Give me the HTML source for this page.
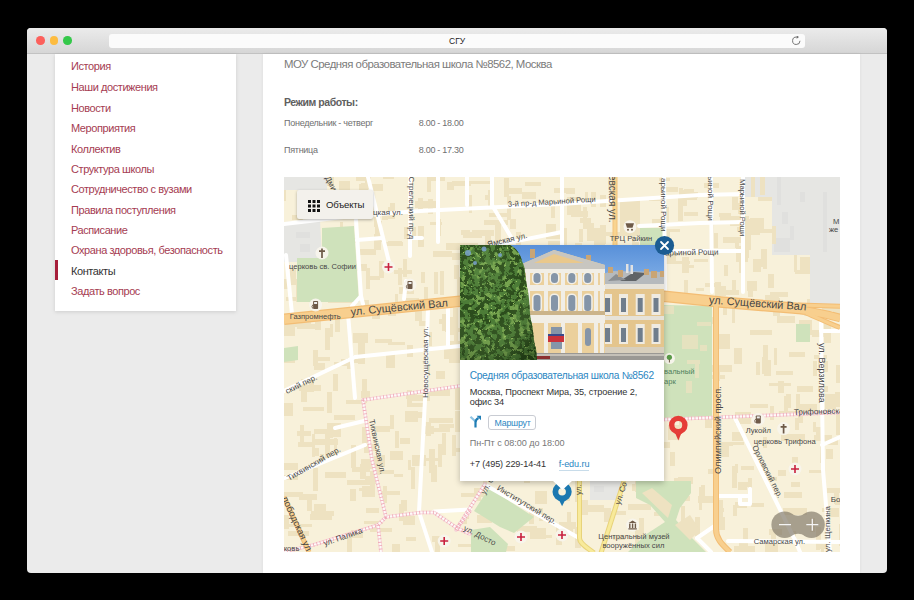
<!DOCTYPE html>
<html><head><meta charset="utf-8">
<style>
*{margin:0;padding:0;box-sizing:border-box}
html,body{width:914px;height:600px;overflow:hidden;background:#000;font-family:"Liberation Sans",sans-serif}
.a{position:absolute}
.t{position:absolute;white-space:nowrap;line-height:1}
#win{position:absolute;left:27px;top:28px;width:860px;height:545px;border-radius:4px;background:#ebebeb;overflow:hidden}
#tb{position:absolute;left:27px;top:28px;width:860px;height:26px;background:linear-gradient(#ebebeb,#d6d6d6);border-bottom:1px solid #c2c2c2;border-radius:4px 4px 0 0}
.tl{position:absolute;top:36px;width:8.6px;height:8.6px;border-radius:50%}
#addr{position:absolute;left:109px;top:34px;width:696px;height:14px;background:#fbfbfb;border-radius:3px}
#side{position:absolute;left:55px;top:54px;width:181px;height:257px;background:#fff;box-shadow:0 1px 4px rgba(0,0,0,.13)}
.m{position:absolute;left:71px;font-size:11px;letter-spacing:-0.42px;color:#a53c52;white-space:nowrap;line-height:1}
#main{position:absolute;left:263px;top:54px;width:597px;height:519px;background:#fff;box-shadow:0 0 3px rgba(0,0,0,.07)}
</style></head><body>
<div id="win"></div>
<div id="tb"></div>
<div class="tl" style="left:36px;background:#fc605c"></div>
<div class="tl" style="left:49.6px;background:#fdbc40"></div>
<div class="tl" style="left:63.2px;background:#34c84a"></div>
<div id="addr"></div>
<div class="t" style="left:449px;top:36.5px;font-size:8.5px;color:#222">СГУ</div>
<svg class="a" style="left:791px;top:36px" width="11" height="11" viewBox="0 0 11 11"><path d="M5.6 1.1 A3.7 3.7 0 1 0 9.0 4.8" fill="none" stroke="#666" stroke-width="0.9"/><path d="M5.6 -0.5 L8.0 1.1 L5.6 2.7 Z" fill="#666"/></svg>

<div id="side"></div>
<div class="a" style="left:55px;top:260px;width:3px;height:20px;background:#a61e3a"></div>
<div class="m" style="top:61px">История</div>
<div class="m" style="top:82.4px">Наши достижения</div>
<div class="m" style="top:102.8px">Новости</div>
<div class="m" style="top:123.1px">Мероприятия</div>
<div class="m" style="top:143.5px">Коллектив</div>
<div class="m" style="top:163.9px">Структура школы</div>
<div class="m" style="top:184.2px">Сотрудничество с вузами</div>
<div class="m" style="top:204.6px">Правила поступления</div>
<div class="m" style="top:225px">Расписание</div>
<div class="m" style="top:245.4px">Охрана здоровья, безопасность</div>
<div class="m" style="top:265.7px;color:#333">Контакты</div>
<div class="m" style="top:286.1px">Задать вопрос</div>

<div id="main"></div>
<div class="t" style="left:284px;top:59px;font-size:11.4px;letter-spacing:-0.5px;color:#7b7b7b">МОУ Средняя образовательная школа №8562, Москва</div>
<div class="t" style="left:284px;top:97px;font-size:10.5px;font-weight:bold;letter-spacing:-0.45px;color:#606060">Режим работы:</div>
<div class="t" style="left:284px;top:118.5px;font-size:9px;letter-spacing:-0.27px;color:#707070">Понедельник - четверг</div>
<div class="t" style="left:418.7px;top:118.5px;font-size:9px;letter-spacing:-0.27px;color:#707070">8.00 - 18.00</div>
<div class="t" style="left:284px;top:145.5px;font-size:9px;letter-spacing:-0.27px;color:#707070">Пятница</div>
<div class="t" style="left:418.7px;top:145.5px;font-size:9px;letter-spacing:-0.27px;color:#707070">8.00 - 17.30</div>

<!-- MAP -->
<svg class="a" style="left:284px;top:177px" width="556" height="375" viewBox="284 177 556 375">
<rect x="284" y="177" width="556" height="375" fill="#f8f1da"/>
<g id="bld" fill="#eee2c1"><rect x="461" y="230" width="9" height="5"/><rect x="485" y="195" width="9" height="5"/><rect x="319" y="207" width="6" height="10"/><rect x="405" y="411" width="13" height="11"/><rect x="827" y="191" width="13" height="4"/><rect x="346" y="290" width="11" height="5"/><rect x="638" y="314" width="9" height="3"/><rect x="395" y="431" width="4" height="17"/><rect x="534" y="287" width="19" height="4"/><rect x="602" y="372" width="20" height="4"/><rect x="829" y="218" width="6" height="10"/><rect x="554" y="188" width="20" height="5"/><rect x="770" y="292" width="18" height="5"/><rect x="535" y="491" width="12" height="13"/><rect x="314" y="439" width="24" height="6"/><rect x="439" y="319" width="8" height="5"/><rect x="374" y="217" width="6" height="10"/><rect x="419" y="321" width="9" height="5"/><rect x="588" y="508" width="22" height="4"/><rect x="513" y="309" width="23" height="4"/><rect x="379" y="261" width="5" height="17"/><rect x="427" y="175" width="4" height="17"/><rect x="814" y="435" width="18" height="6"/><rect x="310" y="514" width="22" height="6"/><rect x="500" y="324" width="6" height="9"/><rect x="318" y="252" width="4" height="9"/><rect x="280" y="230" width="4" height="8"/><rect x="770" y="406" width="4" height="14"/><rect x="484" y="220" width="24" height="5"/><rect x="551" y="206" width="4" height="12"/><rect x="744" y="234" width="7" height="16"/><rect x="362" y="379" width="5" height="24"/><rect x="763" y="437" width="4" height="11"/><rect x="712" y="375" width="13" height="4"/><rect x="734" y="546" width="21" height="6"/><rect x="694" y="259" width="14" height="3"/><rect x="296" y="279" width="6" height="23"/><rect x="530" y="528" width="16" height="11"/><rect x="403" y="259" width="4" height="18"/><rect x="784" y="492" width="18" height="6"/><rect x="327" y="423" width="14" height="14"/><rect x="548" y="241" width="13" height="6"/><rect x="824" y="323" width="7" height="20"/><rect x="375" y="221" width="7" height="21"/><rect x="362" y="486" width="13" height="11"/><rect x="587" y="223" width="7" height="18"/><rect x="575" y="527" width="6" height="21"/><rect x="398" y="268" width="4" height="17"/><rect x="425" y="332" width="7" height="14"/><rect x="537" y="394" width="11" height="15"/><rect x="561" y="375" width="8" height="5"/><rect x="383" y="174" width="11" height="5"/><rect x="686" y="384" width="5" height="17"/><rect x="719" y="213" width="12" height="4"/><rect x="712" y="365" width="20" height="7"/><rect x="528" y="405" width="16" height="6"/><rect x="533" y="375" width="23" height="6"/><rect x="771" y="530" width="5" height="23"/><rect x="750" y="225" width="5" height="9"/><rect x="415" y="201" width="21" height="7"/><rect x="366" y="444" width="10" height="7"/><rect x="822" y="256" width="11" height="12"/><rect x="834" y="488" width="5" height="16"/><rect x="470" y="247" width="6" height="8"/><rect x="590" y="340" width="4" height="18"/><rect x="567" y="197" width="14" height="16"/><rect x="339" y="274" width="6" height="12"/><rect x="353" y="333" width="15" height="10"/><rect x="364" y="521" width="19" height="3"/><rect x="312" y="434" width="3" height="23"/><rect x="635" y="477" width="6" height="9"/><rect x="763" y="345" width="5" height="23"/><rect x="430" y="222" width="12" height="3"/><rect x="370" y="192" width="4" height="13"/><rect x="705" y="283" width="11" height="4"/><rect x="290" y="268" width="6" height="17"/><rect x="386" y="353" width="9" height="15"/><rect x="522" y="361" width="14" height="5"/><rect x="665" y="545" width="6" height="19"/><rect x="636" y="326" width="3" height="10"/><rect x="320" y="454" width="4" height="9"/><rect x="751" y="503" width="13" height="4"/><rect x="444" y="347" width="5" height="12"/><rect x="819" y="542" width="12" height="7"/><rect x="453" y="308" width="5" height="16"/><rect x="562" y="249" width="8" height="4"/><rect x="330" y="324" width="3" height="13"/><rect x="410" y="395" width="20" height="6"/><rect x="681" y="506" width="4" height="24"/><rect x="364" y="447" width="9" height="6"/><rect x="779" y="411" width="21" height="4"/><rect x="573" y="364" width="21" height="6"/><rect x="607" y="511" width="19" height="4"/><rect x="297" y="223" width="3" height="21"/><rect x="593" y="411" width="19" height="5"/><rect x="282" y="475" width="16" height="5"/><rect x="649" y="198" width="12" height="3"/><rect x="429" y="449" width="6" height="24"/><rect x="557" y="318" width="19" height="6"/><rect x="626" y="417" width="4" height="12"/><rect x="696" y="288" width="8" height="3"/><rect x="431" y="428" width="19" height="4"/><rect x="569" y="349" width="10" height="7"/><rect x="392" y="544" width="8" height="12"/><rect x="739" y="540" width="4" height="11"/><rect x="810" y="253" width="10" height="5"/><rect x="814" y="223" width="16" height="7"/><rect x="674" y="261" width="16" height="3"/><rect x="282" y="359" width="13" height="4"/><rect x="473" y="293" width="8" height="6"/><rect x="750" y="218" width="14" height="15"/><rect x="442" y="314" width="7" height="17"/><rect x="482" y="335" width="3" height="10"/><rect x="747" y="281" width="10" height="10"/><rect x="566" y="245" width="7" height="22"/><rect x="735" y="412" width="16" height="12"/><rect x="683" y="192" width="15" height="6"/><rect x="641" y="281" width="7" height="10"/><rect x="544" y="303" width="6" height="24"/><rect x="426" y="422" width="5" height="14"/><rect x="374" y="234" width="7" height="16"/><rect x="403" y="516" width="12" height="9"/><rect x="388" y="207" width="3" height="12"/><rect x="425" y="389" width="20" height="5"/><rect x="512" y="372" width="4" height="9"/><rect x="435" y="540" width="5" height="18"/><rect x="763" y="255" width="4" height="14"/><rect x="530" y="535" width="22" height="3"/><rect x="298" y="442" width="16" height="5"/><rect x="280" y="321" width="15" height="15"/><rect x="824" y="267" width="4" height="16"/><rect x="662" y="530" width="18" height="6"/><rect x="536" y="382" width="6" height="12"/><rect x="795" y="418" width="4" height="12"/><rect x="636" y="438" width="3" height="16"/><rect x="606" y="320" width="5" height="8"/><rect x="449" y="348" width="13" height="15"/><rect x="546" y="262" width="7" height="19"/><rect x="452" y="181" width="19" height="5"/><rect x="424" y="426" width="10" height="8"/><rect x="469" y="332" width="11" height="6"/><rect x="694" y="364" width="7" height="13"/><rect x="739" y="260" width="6" height="13"/><rect x="813" y="361" width="4" height="15"/><rect x="653" y="533" width="5" height="11"/><rect x="826" y="227" width="3" height="14"/><rect x="783" y="508" width="24" height="7"/><rect x="464" y="243" width="14" height="8"/><rect x="652" y="316" width="4" height="11"/><rect x="282" y="279" width="7" height="10"/><rect x="820" y="252" width="6" height="21"/><rect x="522" y="192" width="14" height="7"/><rect x="388" y="311" width="8" height="5"/><rect x="735" y="464" width="3" height="9"/><rect x="795" y="270" width="22" height="4"/><rect x="432" y="536" width="12" height="6"/><rect x="457" y="277" width="6" height="23"/><rect x="635" y="530" width="4" height="16"/><rect x="816" y="535" width="4" height="15"/><rect x="556" y="525" width="6" height="20"/><rect x="741" y="466" width="13" height="4"/><rect x="483" y="469" width="4" height="20"/><rect x="418" y="198" width="5" height="13"/><rect x="829" y="508" width="10" height="9"/><rect x="334" y="362" width="15" height="4"/><rect x="513" y="408" width="20" height="6"/><rect x="652" y="219" width="13" height="5"/><rect x="489" y="453" width="4" height="12"/><rect x="366" y="508" width="13" height="5"/><rect x="836" y="365" width="6" height="18"/><rect x="835" y="212" width="21" height="6"/><rect x="792" y="188" width="3" height="11"/><rect x="825" y="394" width="11" height="15"/><rect x="532" y="272" width="23" height="3"/><rect x="614" y="408" width="4" height="10"/><rect x="394" y="270" width="18" height="4"/><rect x="286" y="297" width="11" height="4"/><rect x="394" y="474" width="9" height="3"/><rect x="501" y="382" width="9" height="4"/><rect x="669" y="328" width="4" height="23"/><rect x="455" y="388" width="5" height="22"/><rect x="838" y="311" width="6" height="11"/><rect x="283" y="515" width="6" height="14"/><rect x="774" y="348" width="3" height="17"/><rect x="639" y="518" width="5" height="14"/><rect x="562" y="228" width="5" height="23"/><rect x="341" y="359" width="23" height="4"/><rect x="351" y="530" width="12" height="8"/><rect x="799" y="320" width="13" height="15"/><rect x="370" y="471" width="5" height="22"/><rect x="744" y="242" width="5" height="16"/><rect x="495" y="220" width="6" height="22"/><rect x="303" y="386" width="9" height="6"/><rect x="346" y="400" width="18" height="4"/><rect x="515" y="394" width="6" height="15"/><rect x="525" y="182" width="16" height="4"/><rect x="708" y="469" width="11" height="5"/><rect x="340" y="222" width="3" height="15"/><rect x="566" y="188" width="9" height="6"/><rect x="715" y="367" width="5" height="14"/><rect x="812" y="225" width="24" height="6"/><rect x="736" y="246" width="12" height="16"/><rect x="793" y="236" width="23" height="3"/><rect x="477" y="460" width="7" height="12"/><rect x="737" y="227" width="23" height="4"/><rect x="427" y="365" width="3" height="11"/><rect x="370" y="528" width="22" height="4"/><rect x="720" y="217" width="18" height="4"/><rect x="769" y="383" width="22" height="3"/><rect x="836" y="412" width="6" height="12"/><rect x="835" y="392" width="6" height="15"/><rect x="379" y="455" width="6" height="12"/><rect x="638" y="546" width="19" height="4"/><rect x="281" y="186" width="5" height="15"/><rect x="567" y="512" width="4" height="18"/><rect x="292" y="174" width="3" height="14"/><rect x="406" y="394" width="11" height="5"/><rect x="546" y="224" width="10" height="9"/><rect x="334" y="415" width="21" height="5"/><rect x="428" y="177" width="17" height="4"/><rect x="642" y="341" width="14" height="10"/><rect x="786" y="190" width="14" height="4"/><rect x="313" y="468" width="5" height="23"/><rect x="360" y="249" width="16" height="6"/><rect x="735" y="239" width="4" height="9"/><rect x="778" y="470" width="8" height="6"/><rect x="697" y="349" width="15" height="4"/><rect x="339" y="261" width="4" height="20"/><rect x="669" y="493" width="12" height="5"/><rect x="524" y="472" width="12" height="6"/><rect x="820" y="255" width="8" height="4"/><rect x="412" y="455" width="14" height="11"/><rect x="773" y="298" width="7" height="18"/><rect x="668" y="425" width="12" height="15"/><rect x="671" y="498" width="6" height="17"/><rect x="452" y="253" width="9" height="7"/><rect x="361" y="183" width="7" height="14"/><rect x="359" y="184" width="6" height="18"/><rect x="670" y="452" width="5" height="14"/><rect x="738" y="484" width="9" height="6"/><rect x="792" y="531" width="4" height="10"/><rect x="299" y="494" width="18" height="6"/><rect x="634" y="282" width="3" height="20"/><rect x="395" y="294" width="3" height="12"/><rect x="438" y="444" width="4" height="23"/><rect x="562" y="496" width="8" height="5"/><rect x="524" y="466" width="6" height="17"/><rect x="401" y="500" width="6" height="11"/><rect x="281" y="250" width="24" height="3"/><rect x="555" y="359" width="11" height="5"/><rect x="474" y="488" width="7" height="13"/><rect x="400" y="438" width="10" height="6"/><rect x="325" y="472" width="21" height="6"/><rect x="479" y="325" width="7" height="9"/><rect x="778" y="183" width="4" height="22"/><rect x="561" y="317" width="12" height="5"/><rect x="578" y="459" width="18" height="4"/><rect x="463" y="232" width="19" height="6"/><rect x="375" y="339" width="17" height="4"/><rect x="539" y="508" width="4" height="13"/><rect x="674" y="493" width="4" height="12"/><rect x="463" y="371" width="4" height="11"/><rect x="826" y="449" width="7" height="10"/><rect x="495" y="546" width="20" height="5"/><rect x="390" y="415" width="4" height="14"/><rect x="299" y="324" width="19" height="5"/><rect x="634" y="349" width="5" height="14"/><rect x="695" y="517" width="5" height="20"/><rect x="516" y="260" width="22" height="6"/><rect x="672" y="496" width="18" height="5"/><rect x="455" y="411" width="5" height="21"/><rect x="679" y="412" width="5" height="15"/><rect x="628" y="328" width="23" height="4"/><rect x="647" y="468" width="5" height="24"/><rect x="301" y="379" width="6" height="23"/><rect x="571" y="211" width="17" height="6"/><rect x="567" y="415" width="16" height="5"/><rect x="811" y="253" width="14" height="6"/><rect x="349" y="546" width="3" height="12"/><rect x="504" y="178" width="5" height="19"/><rect x="477" y="273" width="6" height="23"/><rect x="575" y="256" width="14" height="4"/><rect x="352" y="467" width="18" height="5"/><rect x="595" y="259" width="11" height="13"/><rect x="738" y="482" width="13" height="5"/><rect x="350" y="489" width="6" height="12"/><rect x="491" y="269" width="4" height="8"/><rect x="684" y="280" width="4" height="16"/><rect x="520" y="415" width="14" height="7"/><rect x="758" y="195" width="22" height="6"/><rect x="359" y="488" width="8" height="3"/><rect x="813" y="422" width="3" height="10"/><rect x="411" y="467" width="4" height="22"/><rect x="723" y="237" width="18" height="6"/><rect x="654" y="512" width="21" height="4"/><rect x="668" y="374" width="15" height="7"/><rect x="591" y="273" width="4" height="16"/><rect x="313" y="350" width="5" height="16"/><rect x="582" y="500" width="6" height="15"/><rect x="595" y="425" width="14" height="5"/><rect x="818" y="202" width="18" height="3"/><rect x="621" y="432" width="11" height="16"/><rect x="566" y="357" width="9" height="6"/><rect x="630" y="301" width="14" height="5"/><rect x="574" y="465" width="5" height="15"/><rect x="590" y="486" width="6" height="14"/><rect x="562" y="276" width="24" height="6"/><rect x="723" y="298" width="4" height="17"/><rect x="635" y="470" width="6" height="22"/><rect x="585" y="192" width="3" height="11"/><rect x="796" y="404" width="21" height="7"/><rect x="623" y="407" width="19" height="5"/><rect x="661" y="254" width="15" height="6"/><rect x="337" y="242" width="6" height="23"/><rect x="647" y="313" width="21" height="5"/><rect x="424" y="287" width="4" height="15"/><rect x="639" y="527" width="5" height="9"/><rect x="347" y="480" width="23" height="5"/><rect x="288" y="320" width="23" height="7"/><rect x="546" y="329" width="6" height="11"/><rect x="365" y="179" width="6" height="10"/><rect x="821" y="206" width="10" height="3"/><rect x="683" y="265" width="11" height="3"/><rect x="713" y="443" width="20" height="3"/><rect x="632" y="442" width="23" height="4"/><rect x="820" y="445" width="3" height="18"/><rect x="738" y="203" width="6" height="11"/><rect x="762" y="357" width="4" height="17"/><rect x="526" y="430" width="6" height="14"/><rect x="641" y="412" width="5" height="21"/><rect x="809" y="470" width="13" height="3"/><rect x="825" y="440" width="13" height="5"/><rect x="827" y="488" width="13" height="5"/><rect x="777" y="316" width="18" height="7"/><rect x="732" y="280" width="4" height="15"/><rect x="609" y="482" width="9" height="6"/><rect x="735" y="502" width="12" height="6"/><rect x="732" y="432" width="11" height="9"/><rect x="590" y="475" width="6" height="23"/><rect x="411" y="403" width="15" height="4"/><rect x="423" y="458" width="15" height="3"/><rect x="732" y="466" width="5" height="22"/><rect x="776" y="371" width="17" height="4"/><rect x="388" y="241" width="14" height="5"/><rect x="505" y="369" width="3" height="24"/><rect x="489" y="213" width="21" height="4"/><rect x="614" y="304" width="8" height="3"/><rect x="835" y="501" width="17" height="4"/><rect x="716" y="334" width="14" height="15"/><rect x="820" y="269" width="4" height="11"/><rect x="327" y="192" width="22" height="5"/><rect x="810" y="518" width="5" height="14"/><rect x="347" y="537" width="5" height="18"/><rect x="816" y="427" width="5" height="11"/><rect x="821" y="549" width="3" height="12"/><rect x="477" y="515" width="15" height="8"/><rect x="720" y="442" width="24" height="3"/><rect x="361" y="459" width="13" height="10"/><rect x="611" y="460" width="4" height="12"/><rect x="350" y="355" width="4" height="10"/><rect x="659" y="178" width="11" height="3"/><rect x="800" y="257" width="15" height="15"/><rect x="358" y="343" width="7" height="21"/><rect x="632" y="344" width="6" height="16"/><rect x="632" y="227" width="3" height="19"/><rect x="590" y="228" width="12" height="5"/><rect x="367" y="276" width="13" height="4"/><rect x="555" y="294" width="9" height="16"/><rect x="312" y="512" width="11" height="5"/><rect x="440" y="271" width="4" height="24"/><rect x="839" y="524" width="4" height="22"/><rect x="312" y="448" width="7" height="8"/><rect x="732" y="302" width="3" height="21"/><rect x="575" y="243" width="7" height="11"/><rect x="600" y="225" width="6" height="19"/><rect x="390" y="203" width="5" height="16"/><rect x="433" y="251" width="19" height="6"/><rect x="606" y="250" width="6" height="15"/><rect x="684" y="194" width="13" height="6"/><rect x="764" y="360" width="7" height="16"/><rect x="768" y="274" width="6" height="14"/><rect x="372" y="314" width="8" height="5"/><rect x="530" y="368" width="6" height="21"/><rect x="765" y="295" width="14" height="6"/><rect x="314" y="504" width="12" height="12"/><rect x="577" y="377" width="7" height="12"/><rect x="382" y="212" width="6" height="8"/><rect x="334" y="438" width="3" height="18"/><rect x="603" y="371" width="10" height="6"/><rect x="682" y="190" width="5" height="16"/><rect x="437" y="219" width="4" height="17"/><rect x="762" y="229" width="20" height="4"/><rect x="743" y="528" width="5" height="21"/><rect x="574" y="323" width="14" height="11"/><rect x="415" y="300" width="7" height="21"/><rect x="791" y="482" width="9" height="5"/><rect x="816" y="527" width="5" height="18"/><rect x="484" y="374" width="5" height="16"/><rect x="292" y="226" width="14" height="15"/><rect x="635" y="480" width="22" height="3"/><rect x="639" y="274" width="12" height="5"/><rect x="798" y="408" width="5" height="15"/><rect x="812" y="282" width="6" height="10"/><rect x="613" y="535" width="12" height="5"/><rect x="579" y="229" width="4" height="13"/><rect x="508" y="282" width="3" height="17"/><rect x="750" y="404" width="18" height="4"/><rect x="678" y="348" width="18" height="5"/><rect x="454" y="265" width="5" height="14"/><rect x="608" y="178" width="6" height="12"/><rect x="592" y="359" width="7" height="13"/><rect x="712" y="233" width="6" height="15"/><rect x="315" y="320" width="6" height="10"/><rect x="406" y="537" width="10" height="4"/><rect x="477" y="429" width="22" height="6"/><rect x="570" y="453" width="20" height="5"/><rect x="720" y="442" width="9" height="15"/><rect x="282" y="463" width="16" height="7"/><rect x="600" y="331" width="22" height="5"/><rect x="493" y="344" width="20" height="4"/><rect x="499" y="383" width="4" height="21"/><rect x="756" y="362" width="4" height="13"/><rect x="361" y="391" width="9" height="7"/><rect x="461" y="493" width="23" height="4"/><rect x="519" y="518" width="3" height="17"/><rect x="559" y="522" width="17" height="7"/><rect x="570" y="369" width="14" height="4"/><rect x="613" y="306" width="13" height="12"/><rect x="335" y="315" width="5" height="17"/><rect x="773" y="539" width="15" height="5"/><rect x="838" y="303" width="21" height="4"/><rect x="458" y="544" width="16" height="3"/><rect x="781" y="434" width="24" height="7"/><rect x="516" y="232" width="5" height="16"/><rect x="385" y="242" width="18" height="4"/><rect x="836" y="414" width="5" height="21"/><rect x="452" y="435" width="4" height="21"/><rect x="608" y="426" width="5" height="17"/><rect x="429" y="418" width="24" height="5"/><rect x="510" y="219" width="6" height="10"/><rect x="336" y="238" width="21" height="5"/><rect x="732" y="197" width="6" height="13"/><rect x="681" y="307" width="4" height="10"/><rect x="786" y="394" width="5" height="14"/><rect x="311" y="511" width="23" height="5"/><rect x="627" y="267" width="7" height="22"/><rect x="456" y="514" width="13" height="5"/><rect x="818" y="361" width="10" height="11"/><rect x="682" y="257" width="7" height="16"/><rect x="724" y="265" width="4" height="11"/><rect x="824" y="283" width="10" height="5"/><rect x="496" y="326" width="3" height="21"/><rect x="477" y="266" width="4" height="12"/><rect x="300" y="425" width="4" height="19"/><rect x="332" y="275" width="10" height="5"/><rect x="748" y="478" width="4" height="20"/><rect x="491" y="536" width="7" height="16"/><rect x="407" y="345" width="6" height="12"/><rect x="784" y="396" width="4" height="18"/><rect x="399" y="504" width="5" height="17"/><rect x="431" y="465" width="6" height="17"/><rect x="454" y="321" width="4" height="22"/><rect x="460" y="424" width="5" height="14"/><rect x="560" y="286" width="4" height="12"/><rect x="351" y="445" width="5" height="23"/><rect x="714" y="508" width="10" height="4"/><rect x="297" y="431" width="14" height="5"/><rect x="649" y="438" width="6" height="14"/><rect x="632" y="242" width="7" height="20"/><rect x="679" y="188" width="4" height="11"/><rect x="450" y="317" width="4" height="18"/><rect x="381" y="491" width="19" height="4"/><rect x="524" y="432" width="3" height="21"/><rect x="715" y="282" width="6" height="18"/><rect x="307" y="266" width="6" height="11"/><rect x="792" y="457" width="6" height="14"/><rect x="699" y="487" width="3" height="23"/><rect x="517" y="526" width="20" height="6"/><rect x="632" y="345" width="6" height="15"/><rect x="567" y="525" width="6" height="9"/><rect x="674" y="478" width="5" height="24"/><rect x="637" y="379" width="3" height="14"/><rect x="511" y="249" width="4" height="19"/><rect x="655" y="263" width="5" height="15"/><rect x="804" y="306" width="7" height="10"/><rect x="595" y="299" width="17" height="6"/><rect x="375" y="426" width="15" height="6"/><rect x="745" y="216" width="4" height="11"/><rect x="314" y="279" width="6" height="15"/><rect x="343" y="296" width="14" height="4"/><rect x="320" y="177" width="14" height="9"/><rect x="682" y="545" width="10" height="5"/><rect x="523" y="245" width="8" height="7"/><rect x="641" y="411" width="13" height="10"/><rect x="418" y="226" width="6" height="21"/><rect x="446" y="243" width="22" height="7"/><rect x="374" y="470" width="20" height="4"/><rect x="383" y="486" width="4" height="17"/><rect x="487" y="488" width="3" height="17"/><rect x="632" y="484" width="22" height="7"/><rect x="557" y="362" width="4" height="17"/><rect x="325" y="434" width="5" height="24"/><rect x="330" y="188" width="4" height="20"/><rect x="282" y="492" width="21" height="5"/><rect x="439" y="424" width="15" height="4"/><rect x="526" y="425" width="22" height="4"/><rect x="446" y="341" width="14" height="4"/><rect x="328" y="296" width="24" height="7"/><rect x="765" y="542" width="13" height="14"/><rect x="314" y="429" width="13" height="5"/><rect x="814" y="355" width="13" height="4"/><rect x="776" y="184" width="6" height="15"/><rect x="328" y="423" width="5" height="15"/><rect x="577" y="387" width="3" height="11"/><rect x="778" y="381" width="6" height="12"/><rect x="333" y="374" width="5" height="17"/><rect x="407" y="390" width="5" height="17"/><rect x="325" y="328" width="5" height="22"/><rect x="588" y="444" width="10" height="7"/><rect x="684" y="212" width="14" height="4"/><rect x="818" y="386" width="10" height="6"/><rect x="312" y="263" width="3" height="18"/><rect x="399" y="287" width="15" height="7"/><rect x="628" y="504" width="23" height="6"/><rect x="374" y="456" width="6" height="19"/><rect x="742" y="220" width="6" height="23"/><rect x="684" y="189" width="10" height="5"/><rect x="730" y="216" width="13" height="10"/><rect x="388" y="342" width="17" height="3"/><rect x="292" y="215" width="11" height="5"/><rect x="442" y="433" width="4" height="22"/><rect x="582" y="434" width="23" height="3"/><rect x="472" y="230" width="22" height="6"/><rect x="300" y="242" width="19" height="5"/><rect x="546" y="233" width="14" height="6"/><rect x="622" y="202" width="4" height="22"/><rect x="610" y="190" width="4" height="15"/><rect x="603" y="320" width="3" height="17"/><rect x="467" y="181" width="24" height="3"/><rect x="362" y="427" width="4" height="16"/><rect x="427" y="389" width="23" height="7"/><rect x="299" y="385" width="22" height="6"/><rect x="635" y="414" width="4" height="21"/><rect x="769" y="529" width="13" height="6"/><rect x="694" y="366" width="14" height="5"/><rect x="507" y="196" width="4" height="24"/><rect x="550" y="312" width="4" height="14"/><rect x="356" y="176" width="15" height="5"/><rect x="598" y="288" width="3" height="13"/><rect x="453" y="448" width="23" height="4"/><rect x="796" y="394" width="4" height="17"/><rect x="833" y="308" width="15" height="6"/><rect x="318" y="357" width="12" height="4"/><rect x="293" y="235" width="6" height="11"/><rect x="504" y="249" width="22" height="6"/><rect x="390" y="451" width="13" height="9"/><rect x="733" y="505" width="4" height="11"/><rect x="581" y="505" width="23" height="4"/><rect x="463" y="457" width="14" height="6"/><rect x="469" y="195" width="3" height="18"/><rect x="467" y="360" width="12" height="5"/><rect x="288" y="524" width="24" height="3"/><rect x="624" y="447" width="3" height="10"/><rect x="360" y="464" width="6" height="15"/><rect x="582" y="396" width="19" height="5"/><rect x="465" y="454" width="6" height="20"/><rect x="715" y="290" width="24" height="5"/><rect x="436" y="371" width="9" height="8"/><rect x="546" y="421" width="14" height="7"/><rect x="408" y="460" width="3" height="10"/><rect x="314" y="363" width="11" height="7"/><rect x="485" y="230" width="6" height="23"/><rect x="371" y="184" width="12" height="7"/><rect x="559" y="414" width="6" height="15"/><rect x="461" y="515" width="6" height="9"/><rect x="641" y="325" width="9" height="5"/><rect x="510" y="521" width="13" height="10"/><rect x="421" y="272" width="4" height="11"/><rect x="705" y="417" width="7" height="11"/><rect x="599" y="232" width="22" height="4"/><rect x="701" y="485" width="4" height="16"/><rect x="779" y="234" width="18" height="5"/><rect x="604" y="508" width="7" height="14"/><rect x="717" y="500" width="6" height="24"/><rect x="447" y="182" width="7" height="8"/><rect x="790" y="230" width="10" height="4"/><rect x="662" y="207" width="7" height="19"/><rect x="774" y="544" width="4" height="21"/><rect x="666" y="187" width="12" height="5"/><rect x="339" y="181" width="11" height="15"/><rect x="347" y="358" width="5" height="11"/><rect x="664" y="229" width="16" height="3"/><rect x="478" y="361" width="11" height="10"/><rect x="822" y="508" width="12" height="4"/><rect x="428" y="199" width="5" height="15"/><rect x="592" y="310" width="6" height="18"/><rect x="585" y="381" width="24" height="6"/><rect x="682" y="324" width="5" height="24"/><rect x="497" y="319" width="4" height="24"/><rect x="283" y="403" width="10" height="13"/><rect x="491" y="264" width="3" height="21"/><rect x="719" y="517" width="6" height="13"/><rect x="642" y="381" width="7" height="8"/><rect x="698" y="496" width="17" height="7"/><rect x="411" y="412" width="14" height="6"/><rect x="500" y="372" width="19" height="4"/><rect x="632" y="379" width="5" height="12"/><rect x="789" y="352" width="16" height="5"/><rect x="404" y="227" width="12" height="12"/><rect x="575" y="481" width="4" height="21"/><rect x="538" y="416" width="22" height="6"/><rect x="304" y="317" width="21" height="3"/><rect x="366" y="268" width="4" height="21"/><rect x="572" y="345" width="5" height="24"/><rect x="669" y="343" width="21" height="6"/><rect x="364" y="431" width="5" height="12"/><rect x="488" y="302" width="3" height="11"/><rect x="600" y="195" width="6" height="12"/><rect x="461" y="265" width="9" height="6"/><rect x="761" y="249" width="6" height="18"/><rect x="488" y="190" width="4" height="19"/><rect x="445" y="328" width="21" height="4"/><rect x="496" y="392" width="10" height="16"/><rect x="679" y="314" width="13" height="3"/><rect x="703" y="317" width="16" height="7"/><rect x="704" y="183" width="15" height="5"/><rect x="750" y="330" width="22" height="5"/><rect x="555" y="367" width="19" height="6"/><rect x="505" y="188" width="17" height="6"/><rect x="711" y="218" width="3" height="21"/><rect x="337" y="206" width="17" height="3"/><rect x="661" y="442" width="9" height="6"/><rect x="514" y="394" width="15" height="15"/><rect x="361" y="300" width="8" height="7"/><rect x="434" y="272" width="4" height="22"/><rect x="591" y="367" width="3" height="13"/><rect x="765" y="477" width="12" height="4"/><rect x="309" y="376" width="5" height="16"/><rect x="607" y="312" width="11" height="7"/><rect x="591" y="192" width="5" height="15"/><rect x="596" y="296" width="6" height="13"/><rect x="678" y="477" width="15" height="7"/><rect x="529" y="506" width="5" height="18"/><rect x="307" y="500" width="5" height="11"/><rect x="797" y="386" width="16" height="6"/><rect x="658" y="285" width="6" height="10"/><rect x="794" y="251" width="3" height="21"/><rect x="812" y="330" width="12" height="7"/><rect x="664" y="232" width="6" height="9"/><rect x="748" y="284" width="5" height="13"/><rect x="594" y="231" width="11" height="15"/><rect x="365" y="476" width="11" height="8"/><rect x="493" y="416" width="5" height="9"/><rect x="540" y="449" width="6" height="10"/><rect x="744" y="219" width="16" height="16"/><rect x="575" y="283" width="6" height="16"/><rect x="801" y="208" width="22" height="5"/><rect x="583" y="207" width="4" height="22"/><rect x="753" y="259" width="8" height="13"/><rect x="822" y="303" width="13" height="8"/><rect x="467" y="343" width="6" height="11"/><rect x="721" y="286" width="5" height="10"/><rect x="589" y="472" width="15" height="3"/><rect x="567" y="210" width="10" height="5"/><rect x="478" y="315" width="11" height="4"/><rect x="807" y="299" width="22" height="5"/><rect x="363" y="209" width="10" height="5"/><rect x="580" y="218" width="11" height="5"/><rect x="564" y="312" width="5" height="11"/><rect x="351" y="264" width="16" height="7"/><rect x="288" y="531" width="21" height="5"/><rect x="666" y="260" width="10" height="4"/><rect x="297" y="322" width="13" height="7"/><rect x="327" y="392" width="5" height="21"/><rect x="678" y="197" width="5" height="24"/><rect x="303" y="407" width="21" height="4"/><rect x="734" y="348" width="8" height="16"/><rect x="511" y="327" width="4" height="20"/><rect x="660" y="230" width="4" height="11"/><rect x="403" y="298" width="16" height="14"/></g>
<path d="M620 200 H640 V236 H620 Z" fill="#eee2c1"/>
<!-- gray areas -->
<g fill="#e6e6e3">
<path d="M284 177 H327 V190 H284 Z"/>
<path d="M284 222 L320 220 L322 258 L297 258 L297 262 L284 262 Z"/>
<path d="M745 177 H840 V304 H810 V255 H772 V197 H745 Z"/>
<path d="M590 481 H622 L616 500 H590 Z"/>
</g>
<g fill="#e0e0de">
<rect x="777" y="177" width="4" height="28"/><rect x="823" y="192" width="4" height="60"/><rect x="800" y="192" width="5" height="10"/>
<rect x="782" y="212" width="6" height="12"/><rect x="790" y="226" width="4" height="14"/><rect x="774" y="238" width="16" height="14"/>
<rect x="296" y="232" width="14" height="6"/><rect x="300" y="244" width="10" height="8"/><rect x="594" y="486" width="10" height="6"/>
</g>
<g fill="#eee2c1"><rect x="751" y="177" width="4" height="20"/><rect x="760" y="177" width="5" height="18"/><rect x="772" y="226" width="4" height="18"/></g>
<!-- green -->
<g fill="#cfe2bb">
<path d="M322 228 L354 226 L359 302 L297 302 L297 258 L322 258 Z"/>
<path d="M664 305 L712 306 L712 417 L664 418 Z"/>
<path d="M474 511 L489 488 L534 517 L514 533 L500 527 Z"/>
<path d="M471 530 L490 527 L508 544 L506 552 L471 552 Z"/>
<path d="M636 481 L691 481 L691 493 L680 508 L676 520 L690 536 L706 552 L628 552 L645 535 L665 522 L650 505 L636 498 Z"/>
<path d="M284 348 L298 346 L298 360 L284 362 Z"/>
<path d="M640 228 L663 228 L663 245 L640 245 Z"/>
<path d="M796 324 L810 324 L810 342 L796 342 Z"/>
</g>
<path d="M440 512 L470 510 L458 527 Z" fill="#fbf6dd"/>
<g fill="#e5e2bf"><rect x="682" y="335" width="16" height="14"/><rect x="697" y="322" width="14" height="4"/><rect x="700" y="345" width="7" height="6"/><rect x="687" y="360" width="13" height="4"/><rect x="695" y="364" width="4" height="14"/><rect x="686" y="381" width="6" height="12"/><rect x="664" y="306" width="10" height="8"/></g>
<path d="M642 493 L652 488 L672 505 L668 518 Z M675 525 L690 515 L700 530 L690 540 Z" fill="#eee2c1"/>
<!-- white roads -->
<g fill="none" stroke="#fff" stroke-width="4" stroke-linecap="round" stroke-linejoin="round">
<path d="M284 224 L352 216 L420 211 L560 204 L700 195 L743 194"/>
<path d="M487 247 L562 232"/>
<path d="M639 226 L700 223 L743 222"/>
<path d="M664 251 L743 251"/>
<path d="M368 177 L389 262"/>
<path d="M356 220 L361 296 L352 306 M361 296 L363 304"/>
<path d="M357 240 L382 238"/>
<path d="M286 255 L292 314"/>
<path d="M410 177 L410 256"/>
<path d="M410 238 L422 238"/>
<path d="M438 177 L438 242"/>
<path d="M467 177 L467 205"/>
<path d="M492 177 L492 205 L514 242"/>
<path d="M562 177 L562 245"/>
<path d="M664 177 L665 292"/>
<path d="M711 177 L712 292"/>
<path d="M743 177 L743 292"/>
<path d="M406 281 L404 299"/>
<path d="M348 314 L355 398"/>
<path d="M284 391 L355 357 L460 346"/>
<path d="M428 308 L425 400 L419 512 L432 552"/>
<path d="M448 306 L448 346"/>
<path d="M335 428 L364 421"/>
<path d="M285 478 L365 445"/>
<path d="M434 511.5 L470 509.5"/>
<path d="M487 486 L579 538"/>
<path d="M821 318 L823 470 L830 552"/>
<path d="M821 331 L840 331"/>
<path d="M822 445 L840 437"/>
<path d="M728 541 L840 542"/>
<path d="M735 418 L795 540 L800 552"/>
<path d="M697 538 L716 525"/>
<path d="M697 538 L711 552"/>
<path d="M716 496 L750 496 L750 489"/>
<path d="M740 496 L740 504 L750 504 L750 489"/>
</g>
<!-- pink routes -->
<g fill="none" stroke="#f6d3d8" stroke-width="3.6" stroke-linecap="round" stroke-linejoin="round">
<path d="M363 400 L460 386"/>
<path d="M363 400 L372 460 L386 517 L421 512.5 L434 512.5 L457 528 L470 534"/>
<path d="M457 528 L470 511"/>
<path d="M386 517 L378 525 L313 545 L284 552"/>
<path d="M378 525 L381 552"/>
<path d="M456 530 L485 484"/>
<path d="M664 419.5 L840 412.5"/>
</g>
<g fill="none" stroke="#fefafa" stroke-width="1.8">
<path d="M363 400 L460 386"/>
<path d="M363 400 L372 460 L386 517 L421 512.5 L434 512.5 L457 528 L470 534"/>
<path d="M457 528 L470 511"/>
<path d="M386 517 L378 525 L313 545 L284 552"/>
<path d="M378 525 L381 552"/>
<path d="M456 530 L485 484"/>
<path d="M664 419.5 L840 412.5"/>
</g>
<g fill="none" stroke="#efa5b2" stroke-width="3.6" stroke-dasharray="0.8 2.6">
<path d="M363 400 L460 386"/>
<path d="M363 400 L372 460 L386 517 L421 512.5 L434 512.5 L457 528 L470 534"/>
<path d="M457 528 L470 511"/>
<path d="M386 517 L378 525 L313 545 L284 552"/>
<path d="M378 525 L381 552"/>
<path d="M456 530 L485 484"/>
<path d="M664 419.5 L840 412.5"/>
</g>
<!-- orange roads -->
<g fill="none" stroke-linecap="butt" stroke-linejoin="round">
<path d="M284 319.3 L460 301.3 L664 296.3 L720 302 L805 309" stroke="#f3bd74" stroke-width="11.5"/>
<path d="M798 305 L840 306.3" stroke="#f3bd74" stroke-width="5"/>
<path d="M795 309 C812 311 825 314 840 318" stroke="#f3bd74" stroke-width="8.5"/>
<path d="M806 313 C818 318 828 323 840 327.5" stroke="#f3bd74" stroke-width="5"/>
<path d="M716 305 L716 529 C716 540 724 546 730 552" stroke="#f3bd74" stroke-width="6"/>
<path d="M284 497 L309 552" stroke="#f3bd74" stroke-width="5"/>
<path d="M615 177 L615 245" stroke="#f3c27a" stroke-width="5"/>
<path d="M284 319.3 L460 301.3 L664 296.3 L720 302 L805 309" stroke="#f8cf8e" stroke-width="9"/>
<path d="M798 305 L840 306.3" stroke="#f8cf8e" stroke-width="3"/>
<path d="M795 309 C812 311 825 314 840 318" stroke="#f8cf8e" stroke-width="6.5"/>
<path d="M806 313 C818 318 828 323 840 327.5" stroke="#f8cf8e" stroke-width="3"/>
<path d="M716 305 L716 529 C716 540 724 546 730 552" stroke="#f8cf8e" stroke-width="4"/>
<path d="M284 497 L309 552" stroke="#f8cf8e" stroke-width="3"/>
<path d="M615 177 L615 245" stroke="#f8d490" stroke-width="3"/>
<path d="M579.5 481 L579.5 538 C579.5 544 588 548 594 553" stroke="#e8d37a" stroke-width="5"/>
<path d="M624 481 L601 553" stroke="#e8d37a" stroke-width="5"/>
<path d="M579.5 481 L579.5 538 C579.5 544 588 548 594 553" stroke="#f8ea9a" stroke-width="3"/>
<path d="M624 481 L601 553" stroke="#f8ea9a" stroke-width="3"/>
</g>
<g id="labels" font-family="Liberation Sans" fill="#474747">
<text transform="translate(351 315.5) rotate(-5.4)" font-size="11">ул. Сущёвский Вал</text>
<text transform="translate(708.7 303.5) rotate(4.1)" font-size="11">ул. Сущёвский Вал</text>
<text transform="translate(289 268.6)" font-size="7.6">церковь св. Софии</text>
<text transform="translate(289.7 318.8)" font-size="7.6">Газпромнефть</text>
<text transform="translate(373 214.6)" font-size="8">цкая ул.</text>
<text transform="translate(408.5 176.5) rotate(90)" font-size="8">Стрелецкий пр-д</text>
<text transform="translate(508 206.8) rotate(-3.3)" font-size="7.6">3-й пр-д Марьиной Рощи</text>
<text transform="translate(488 247) rotate(-13)" font-size="8">Ямская ул.</text>
<text transform="translate(609.3 175) rotate(90)" font-size="10">евская ул.</text>
<text transform="translate(609.7 240.5)" font-size="7.6">ТРЦ Райкин</text>
<text transform="translate(660.5 178) rotate(90)" font-size="8">арьиной Рощи</text>
<text transform="translate(665 255.5) rotate(-1)" font-size="8">арьиной Рощи</text>
<text transform="translate(708 176) rotate(90)" font-size="8">ьиной Рощи</text>
<text transform="translate(740 179) rotate(90)" font-size="7.6">Марьиной Рощи</text>
<text transform="translate(833 224)" font-size="7.6">М</text>
<text transform="translate(829 231.5)" font-size="7.6">же</text>
<text transform="translate(664 373.7)" font-size="7.6" fill="#4f7f5c">вальный</text>
<text transform="translate(664 383.7)" font-size="7.6" fill="#4f7f5c">арк</text>
<text transform="translate(819 343) rotate(90)" font-size="9">ул. Верзилова</text>
<text transform="translate(720.5 474) rotate(-90)" font-size="9.2">Олимпийский просп.</text>
<text transform="translate(794 415) rotate(-1.8)" font-size="8">Трифоновская</text>
<text transform="translate(745.7 433)" font-size="7.6">Лукойл</text>
<text transform="translate(753.7 443.8)" font-size="7.6">церковь Трифона</text>
<text transform="translate(752 447) rotate(63)" font-size="8">Орловский пер.</text>
<text transform="translate(753.7 543.5)" font-size="7.6">Самарская ул.</text>
<text transform="translate(830.7 502)" font-size="8">Бо</text>
<text transform="translate(830 552) rotate(-90)" font-size="8">ул. Щепкина</text>
<text transform="translate(598.3 539)" font-size="7.6">Центральный музей</text>
<text transform="translate(602.4 547.5)" font-size="7.6">вооружённых сил</text>
<text transform="translate(496.4 489.5) rotate(31)" font-size="8">Институтский пер.</text>
<text transform="translate(581 495) rotate(-90)" font-size="8">ул.</text>
<text transform="translate(620 505) rotate(-72)" font-size="8">ул. Со</text>
<text transform="translate(485 495) rotate(-60)" font-size="8">ул. С</text>
<text transform="translate(463 530) rotate(27)" font-size="8">ул. Досто</text>
<text transform="translate(287 394) rotate(-26)" font-size="8">ский пер.</text>
<text transform="translate(427.5 398) rotate(-90)" font-size="8">Новосущёвская ул.</text>
<text transform="translate(369 420) rotate(78)" font-size="8">Тихвинская ул.</text>
<text transform="translate(289 481) rotate(-30)" font-size="8">Тихвинский пер.</text>
<text transform="translate(324.7 546) rotate(-19)" font-size="8">ул. Палика</text>
<text transform="translate(281.5 498) rotate(65)" font-size="9.5">лободская ул.</text>
<text transform="translate(271 551)" font-size="7.6">церковь</text>
<text transform="translate(325 178) rotate(62)" font-size="8">Дмит</text>
</g>
<g id="icons">
<circle cx="388.5" cy="267" r="6.5" fill="#f8f4ec" opacity="0.95"/><path d="M384.5 267 H392.5 M388.5 263 V271" stroke="#c8203f" stroke-width="1.6"/>
<circle cx="444.2" cy="541" r="6.5" fill="#f8f4ec" opacity="0.95"/><path d="M440.2 541 H448.2 M444.2 537 V545" stroke="#c8203f" stroke-width="1.6"/>
<circle cx="521" cy="537" r="6.5" fill="#f8f4ec" opacity="0.95"/><path d="M517 537 H525 M521 533 V541" stroke="#c8203f" stroke-width="1.6"/>
<circle cx="562" cy="535" r="6.5" fill="#f8f4ec" opacity="0.95"/><path d="M558 535 H566 M562 531 V539" stroke="#c8203f" stroke-width="1.6"/>
<circle cx="795" cy="469" r="6.5" fill="#f8f4ec" opacity="0.95"/><path d="M791 469 H799 M795 465 V473" stroke="#c8203f" stroke-width="1.6"/>
<circle cx="322" cy="253" r="6.5" fill="#f8f4ec" opacity="0.95"/><path d="M322 248.5 V258 M319 251.2 H325" stroke="#6e5a48" stroke-width="1.7"/>
<circle cx="783.6" cy="428.6" r="6.5" fill="#f8f4ec" opacity="0.95"/><path d="M783.6 424.1 V433.6 M780.6 426.8 H786.6" stroke="#6e5a48" stroke-width="1.7"/>
<circle cx="410" cy="285" r="6.5" fill="#f8f4ec" opacity="0.95"/><rect x="407.5" y="281" width="5" height="8" rx="0.8" fill="#6e5a48"/><rect x="408.5" y="282" width="3" height="2" fill="#eee"/><path d="M407.5 284.5 Q405.5 286 407 288.5" stroke="#6e5a48" fill="none" stroke-width="0.9"/>
<circle cx="315.6" cy="305" r="6.5" fill="#f8f4ec" opacity="0.95"/><rect x="313.1" y="301" width="5" height="8" rx="0.8" fill="#6e5a48"/><rect x="314.1" y="302" width="3" height="2" fill="#eee"/><path d="M313.1 304.5 Q311.1 306 312.6 308.5" stroke="#6e5a48" fill="none" stroke-width="0.9"/>
<circle cx="758.3" cy="419.4" r="6.5" fill="#f8f4ec" opacity="0.95"/><rect x="755.8" y="415.4" width="5" height="8" rx="0.8" fill="#6e5a48"/><rect x="756.8" y="416.4" width="3" height="2" fill="#eee"/><path d="M755.8 418.9 Q753.8 420.4 755.3 422.9" stroke="#6e5a48" fill="none" stroke-width="0.9"/>
<circle cx="630" cy="226.7" r="6.5" fill="#f8f4ec" opacity="0.95"/><path d="M625.5 223.2 H634 L632.5 227.7 H627 Z" fill="#6e5a48"/><circle cx="628" cy="229.7" r="1" fill="#6e5a48"/><circle cx="632" cy="229.7" r="1" fill="#6e5a48"/>
<circle cx="632.6" cy="525" r="6.5" fill="#f8f4ec" opacity="0.95"/><path d="M628.6 523 L632.6 520.5 L636.6 523 Z M629.1 523.5 h1.4 v4.5 h-1.4z M631.9 523.5 h1.4 v4.5 h-1.4z M634.7 523.5 h1.4 v4.5 h-1.4z M628.4 528.2 h8.4 v1.2 h-8.4z" fill="#6e5a48"/>
<circle cx="669.4" cy="358.5" r="5.5" fill="#f8f4ec" opacity="0.95"/><circle cx="669.4" cy="357.3" r="2.6" fill="#5a9a48"/><rect x="668.9" y="359.5" width="1" height="3" fill="#6e5a48"/>
<path d="M674.3 431 L682.3 431 L678.3 440.5 Z" fill="#e03a34"/><circle cx="678.3" cy="425" r="6.6" fill="none" stroke="#e53d37" stroke-width="5.4"/>
<g opacity="0.7" fill="#857d6d"><circle cx="784.7" cy="524.7" r="13.3"/><circle cx="811.5" cy="524.7" r="13.3"/><path d="M791 514 Q798 517.5 805.2 514 L805.2 535.4 Q798 532 791 535.4 Z"/></g>
<path d="M779 524.7 H791 M806.3 524.7 H818.3 M812.3 518.7 V530.7" stroke="#f4f4f4" stroke-width="1.3"/>
</g>
</svg>
<div class="a" style="left:297px;top:190px;width:76px;height:29px;background:#f3f1ec;border-radius:2px;box-shadow:0 1px 3px rgba(0,0,0,.3)"></div>
<svg class="a" style="left:307.5px;top:199.5px" width="12" height="12" viewBox="0 0 12 12" fill="#111"><rect x="0" y="0" width="3" height="3"/><rect x="4.5" y="0" width="3" height="3"/><rect x="9" y="0" width="3" height="3"/><rect x="0" y="4.5" width="3" height="3"/><rect x="4.5" y="4.5" width="3" height="3"/><rect x="9" y="4.5" width="3" height="3"/><rect x="0" y="9" width="3" height="3"/><rect x="4.5" y="9" width="3" height="3"/><rect x="9" y="9" width="3" height="3"/></svg>
<div class="t" style="left:326px;top:200px;font-size:9.6px;letter-spacing:-0.2px;color:#222">Объекты</div>
<div class="a" style="left:460px;top:245px;width:204px;height:236px;background:#fff;box-shadow:0 2px 6px rgba(0,0,0,.25)"></div>
<svg class="a" style="left:551px;top:481px" width="22" height="28" viewBox="0 0 22 28"><path d="M7 17 L15.2 17 L11.1 25.2 Z" fill="#1b78b0"/><circle cx="11.1" cy="10.7" r="6.7" fill="none" stroke="#1b78b0" stroke-width="5.8"/></svg>
<svg class="a" style="left:551.5px;top:480px" width="21" height="11" viewBox="0 0 21 11"><path d="M0 0 L21 0 L10.5 10 Z" fill="#fff"/></svg>
<svg class="a" style="left:460px;top:245px" width="204" height="115" viewBox="0 0 204 115">
<defs>
<linearGradient id="sky" x1="0" y1="0" x2="0" y2="0.4"><stop offset="0" stop-color="#5890d9"/><stop offset="1" stop-color="#8ab6ea"/></linearGradient>
<filter id="leaf" x="0" y="0" width="100%" height="100%" color-interpolation-filters="sRGB">
<feTurbulence type="fractalNoise" baseFrequency="0.2" numOctaves="3" seed="3" result="n"/>
<feColorMatrix in="n" type="matrix" values="0 0 0 0 0.17  0 0 0 0 0.3  0 0 0 0 0.11  0 0 0 16 -7.8" result="dk"/>
<feComposite in="dk" in2="SourceGraphic" operator="in"/>
</filter>
<filter id="leaf2" x="0" y="0" width="100%" height="100%" color-interpolation-filters="sRGB">
<feTurbulence type="fractalNoise" baseFrequency="0.12" numOctaves="2" seed="11" result="n"/>
<feColorMatrix in="n" type="matrix" values="0 0 0 0 0.45  0 0 0 0 0.63  0 0 0 0 0.3  0 0 0 16 -8.4" result="lt"/>
<feComposite in="lt" in2="SourceGraphic" operator="in"/>
</filter>
<filter id="leaf3" x="0" y="0" width="100%" height="100%" color-interpolation-filters="sRGB">
<feTurbulence type="fractalNoise" baseFrequency="0.45" numOctaves="2" seed="5" result="n"/>
<feColorMatrix in="n" type="matrix" values="0 0 0 0 0.6  0 0 0 0 0.76  0 0 0 0 0.38  0 0 0 16 -11.4" result="hl"/>
<feComposite in="hl" in2="SourceGraphic" operator="in"/>
</filter>
<radialGradient id="treeshade" cx="0.35" cy="0.2" r="0.9"><stop offset="0" stop-color="#a8d080" stop-opacity="0.12"/><stop offset="0.5" stop-color="#a8d080" stop-opacity="0"/><stop offset="1" stop-color="#0c1a06" stop-opacity="0.35"/></radialGradient>
</defs>
<rect width="204" height="115" fill="url(#sky)"/>
<!-- right wing roof & chimneys -->
<path d="M140 30 L152 26 L204 27 L204 39 L140 39 Z" fill="#b6babd"/>
<path d="M160 36 L174 27 L186 28 L176 36 Z" fill="#5f6367"/>
<path d="M148 36 L156 29 L166 35 Z" fill="#8a8e92"/>
<g fill="#c9a575"><rect x="148" y="22" width="5" height="6"/><rect x="158" y="25" width="5" height="7"/><rect x="184" y="24" width="5" height="6"/><rect x="191" y="26" width="6" height="7"/><rect x="200" y="26" width="4" height="6"/><rect x="126" y="10" width="5" height="8"/><rect x="70" y="4" width="5" height="9"/></g>
<g fill="#e2e2e2"><rect x="166" y="19" width="2.5" height="9"/><rect x="170.5" y="20" width="2.5" height="9"/></g>
<!-- right wing facade -->
<rect x="144" y="39" width="60" height="71" fill="#e4c58d"/>
<rect x="144" y="39" width="60" height="5" fill="#e6e2d8"/>
<rect x="144" y="71" width="60" height="4" fill="#e6e2d8"/>
<rect x="144" y="102" width="60" height="8" fill="#d8cfbd"/>
<g fill="#efebe2">
<rect x="143" y="49" width="9" height="21"/><rect x="159" y="49" width="9" height="21"/><rect x="175.7" y="49" width="9" height="21"/><rect x="191.5" y="49" width="9" height="21"/>
<rect x="143" y="79" width="9" height="20"/><rect x="159" y="79" width="9" height="20"/><rect x="175.7" y="79" width="9" height="20"/><rect x="191.5" y="79" width="9" height="20"/>
</g>
<g fill="#6f7d8c">
<rect x="145" y="53" width="5" height="14"/><rect x="161" y="53" width="5" height="14"/><rect x="177.7" y="53" width="5" height="14"/><rect x="193.5" y="53" width="5" height="14"/>
<rect x="145" y="83" width="5" height="14"/><rect x="161" y="83" width="5" height="14"/><rect x="177.7" y="83" width="5" height="14"/><rect x="193.5" y="83" width="5" height="14"/>
</g>
<!-- main block -->
<path d="M62 19 L94 5 L145 20 L145 110 L62 110 Z" fill="#ebd09c"/>
<path d="M62 19 L94 5 L145 20 L145 25 L62 25 Z" fill="#c8c6c0"/>
<path d="M74 18 L94 9 L124 18 Z" fill="#e9c88c"/>
<g fill="#f1eee6">
<rect x="62" y="24" width="83" height="4"/><rect x="62" y="40" width="83" height="6"/><rect x="62" y="66" width="83" height="12"/>
<rect x="66" y="25" width="4" height="85"/><rect x="84" y="25" width="4" height="85"/><rect x="101" y="25" width="4" height="85"/><rect x="118" y="25" width="4" height="85"/><rect x="134" y="25" width="4" height="85"/><rect x="140" y="25" width="4" height="85"/>
</g>
<g fill="#f3f0e8"><rect x="72.0" y="26.5" width="10" height="13" rx="5"/><rect x="72.0" y="48.5" width="10" height="19" rx="4.5"/><rect x="89.5" y="26.5" width="10" height="13" rx="5"/><rect x="89.5" y="48.5" width="10" height="19" rx="4.5"/><rect x="106.8" y="26.5" width="10" height="13" rx="5"/><rect x="106.8" y="48.5" width="10" height="19" rx="4.5"/><rect x="122.7" y="26.5" width="10" height="13" rx="5"/><rect x="122.7" y="48.5" width="10" height="19" rx="4.5"/></g>
<g fill="#8595a8">
<rect x="73.5" y="28" width="7" height="10" rx="3.5"/><rect x="91" y="28" width="7" height="10" rx="3.5"/><rect x="108.3" y="28" width="7" height="10" rx="3.5"/><rect x="124.2" y="28" width="7" height="10" rx="3.5"/>
<rect x="73.5" y="50" width="7" height="16" rx="3"/><rect x="91" y="50" width="7" height="16" rx="3"/><rect x="108.3" y="50" width="7" height="16" rx="3"/><rect x="124.2" y="50" width="7" height="16" rx="3"/>
<rect x="91" y="82" width="11" height="22"/><rect x="125" y="83" width="6" height="18" rx="3"/>
</g>
<rect x="62" y="66" width="83" height="4" fill="#cbb48a"/>
<rect x="88" y="91" width="16" height="6" fill="#c9323a"/>
<rect x="88" y="89" width="16" height="2" fill="#3a4a8a"/>
<rect x="0" y="108" width="204" height="7" fill="#9a9894"/>
<rect x="60" y="109" width="144" height="2" fill="#c4c0b8"/>
<rect x="60" y="111" width="30" height="3" fill="#8b3030"/>
<!-- tree -->
<path d="M0 0 L50 0 C56 3 60 8 62 16 C66 24 65 32 67 42 C70 54 69 64 71 76 C74 86 73 96 76 104 L77 115 L0 115 Z" fill="#4b7b36"/>
<path d="M0 0 L50 0 C56 3 60 8 62 16 C66 24 65 32 67 42 C70 54 69 64 71 76 C74 86 73 96 76 104 L77 115 L0 115 Z" fill="#000" filter="url(#leaf2)"/>
<path d="M0 0 L50 0 C56 3 60 8 62 16 C66 24 65 32 67 42 C70 54 69 64 71 76 C74 86 73 96 76 104 L77 115 L0 115 Z" fill="#000" filter="url(#leaf)"/>
<path d="M0 0 L50 0 C56 3 60 8 62 16 C66 24 65 32 67 42 C70 54 69 64 71 76 C74 86 73 96 76 104 L77 115 L0 115 Z" fill="#000" filter="url(#leaf3)"/>
<path d="M0 0 L50 0 C56 3 60 8 62 16 C66 24 65 32 67 42 C70 54 69 64 71 76 C74 86 73 96 76 104 L77 115 L0 115 Z" fill="url(#treeshade)"/>
<g fill="#7fa7d8" opacity="0.8"><circle cx="8" cy="8" r="3"/><circle cx="24" cy="4" r="2.5"/><circle cx="15" cy="18" r="2"/><circle cx="40" cy="10" r="2"/></g>
</svg>
<svg class="a" style="left:654px;top:235px" width="21" height="21" viewBox="0 0 21 21"><circle cx="10.5" cy="10.5" r="9.6" fill="#1b5c92"/><path d="M7 7 L14 14 M14 7 L7 14" stroke="#fff" stroke-width="1.8" stroke-linecap="round"/></svg>
<div class="t" style="left:469.7px;top:371px;font-size:10.2px;letter-spacing:-0.3px;color:#2b86c2">Средняя образовательная школа №8562</div>
<div class="t" style="left:469.7px;top:387.6px;font-size:9.2px;letter-spacing:-0.12px;color:#333">Москва, Проспект Мира, 35, строение 2,</div>
<div class="t" style="left:469.7px;top:398.2px;font-size:9.2px;letter-spacing:-0.12px;color:#333">офис 34</div>
<svg class="a" style="left:469px;top:415px" width="13" height="13" viewBox="0 0 13 13"><path d="M1.5 1.8 L6.5 6.5" stroke="#8ec3e3" stroke-width="2.2" fill="none"/><path d="M6.5 12.5 V7.5 Q6.5 4.5 9.5 3" stroke="#1f7db5" stroke-width="2.2" fill="none"/><path d="M7.6 0.8 H12 V5.2 Z" fill="#1f7db5"/></svg>
<div class="a" style="left:488.3px;top:414.5px;width:47.5px;height:15.5px;border:1px solid #c9ccd3;border-radius:3px;background:#fff"></div>
<div class="t" style="left:494.5px;top:418.5px;font-size:8.8px;letter-spacing:-0.2px;color:#2b86c2">Маршрут</div>
<div class="t" style="left:469.7px;top:439px;font-size:9.1px;letter-spacing:-0.05px;color:#777">Пн-Пт с 08:00 до 18:00</div>
<div class="t" style="left:469.7px;top:459.5px;font-size:9.1px;letter-spacing:-0.1px;color:#333">+7 (495) 229-14-41</div>
<div class="t" style="left:558.8px;top:459.5px;font-size:9.1px;letter-spacing:-0.1px;color:#2b86c2">f-edu.ru</div>
<div class="a" style="left:558.8px;top:469.5px;width:30.5px;height:1px;background:#c8dcea"></div>



</body></html>
